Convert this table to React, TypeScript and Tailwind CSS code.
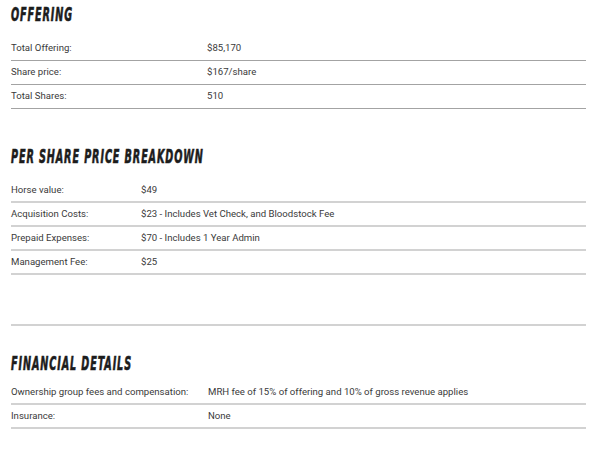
import React from "react";

const headingFont = {
  fontFamily: '"Liberation Sans Narrow", "DejaVu Sans Condensed", "Liberation Sans", sans-serif',
};

function Heading({ children }: { children: React.ReactNode }) {
  return (
    <h2
      className="h-[18px] text-[18px] leading-[18px] font-bold italic uppercase tracking-[1.5px] text-[#1c1c1c] [-webkit-text-stroke:0.6px_#1c1c1c] origin-left scale-x-[0.595] scale-y-[1.05] whitespace-nowrap"
      style={headingFont}
    >
      {children}
    </h2>
  );
}

type Row = [string, string];

function Rows({ rows, labelW, thick }: { rows: Row[]; labelW: string; thick?: boolean }) {
  return (
    <div className="flex flex-col">
      {rows.map(([l, v]) => (
        <div
          key={l}
          className={
            thick
              ? "flex h-[24px] items-center border-b-2 border-[#d2d2d2]"
              : "flex h-[24px] items-center border-b border-[#a3a3a3]"
          }
        >
          <div className={labelW + " shrink-0"}>{l}</div>
          <div>{v}</div>
        </div>
      ))}
    </div>
  );
}

export default function App() {
  return (
    <div
      className="w-[596px] h-[450px] bg-white overflow-hidden px-[11px] text-[9.6px] text-[#3a3a3a]"
      style={{ fontFamily: 'Roboto, "Liberation Sans", sans-serif' }}
    >
      <div className="w-[575px]">
        <div className="pt-[6px]">
          <Heading>Offering</Heading>
        </div>
        <div className="mt-[13px]">
          <Rows
            labelW="w-[196px]"
            rows={[
              ["Total Offering:", "$85,170"],
              ["Share price:", "$167/share"],
              ["Total Shares:", "510"],
            ]}
          />
        </div>
        <div className="mt-[39px]">
          <Heading>Per Share Price Breakdown</Heading>
        </div>
        <div className="mt-[13px]">
          <Rows
            thick
            labelW="w-[130px]"
            rows={[
              ["Horse value:", "$49"],
              ["Acquisition Costs:", "$23 - Includes Vet Check, and Bloodstock Fee"],
              ["Prepaid Expenses:", "$70 - Includes 1 Year Admin"],
              ["Management Fee:", "$25"],
            ]}
          />
        </div>
        <div className="h-[51px] border-b-2 border-[#d2d2d2]" />
        <div className="mt-[29px]">
          <Heading>Financial Details</Heading>
        </div>
        <div className="mt-[8px]">
          <Rows
            thick
            labelW="w-[197px]"
            rows={[
              ["Ownership group fees and compensation:", "MRH fee of 15% of offering and 10% of gross revenue applies"],
              ["Insurance:", "None"],
            ]}
          />
        </div>
      </div>
    </div>
  );
}
